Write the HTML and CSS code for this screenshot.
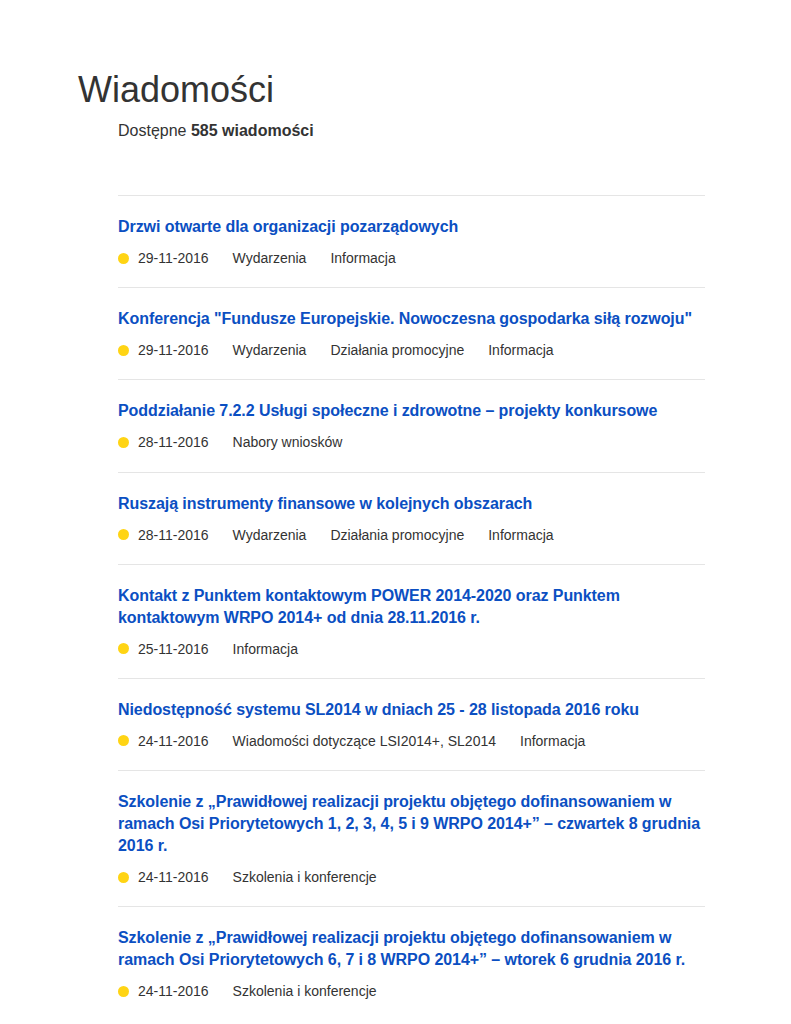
FILE: index.html
```html
<!DOCTYPE html>
<html>
	<head>
		<meta charset="UTF-8">
		<title>Wiadomości</title>
		<link rel="stylesheet" href="styles.css">
	</head>
	<body>
		<div id="news">
			<h1 class="title">Wiadomości</h1>
			<p class="count">Dostępne <b>585 wiadomości</b></p>
			<ul class="list">
				<li>
					<a href="">Drzwi otwarte dla organizacji pozarządowych</a>
					<div class="meta"><span class="date">29-11-2016</span><span>Wydarzenia</span><span>Informacja</span></div>
				</li>
				<li>
					<a href="">Konferencja "Fundusze Europejskie. Nowoczesna gospodarka siłą rozwoju"</a>
					<div class="meta"><span class="date">29-11-2016</span><span>Wydarzenia</span><span>Działania promocyjne</span><span>Informacja</span></div>
				</li>
				<li>
					<a href="">Poddziałanie 7.2.2 Usługi społeczne i zdrowotne – projekty konkursowe</a>
					<div class="meta"><span class="date">28-11-2016</span><span>Nabory wniosków</span></div>
				</li>
				<li>
					<a href="">Ruszają instrumenty finansowe w kolejnych obszarach</a>
					<div class="meta"><span class="date">28-11-2016</span><span>Wydarzenia</span><span>Działania promocyjne</span><span>Informacja</span></div>
				</li>
				<li>
					<a href="">Kontakt z Punktem kontaktowym POWER 2014-2020 oraz Punktem kontaktowym WRPO 2014+ od dnia 28.11.2016 r.</a>
					<div class="meta"><span class="date">25-11-2016</span><span>Informacja</span></div>
				</li>
				<li>
					<a href="">Niedostępność systemu SL2014 w dniach 25 - 28 listopada 2016 roku</a>
					<div class="meta"><span class="date">24-11-2016</span><span>Wiadomości dotyczące LSI2014+, SL2014</span><span>Informacja</span></div>
				</li>
				<li>
					<a href="">Szkolenie z „Prawidłowej realizacji projektu objętego dofinansowaniem w ramach Osi Priorytetowych 1, 2, 3, 4, 5 i 9 WRPO 2014+” – czwartek 8 grudnia 2016 r.</a>
					<div class="meta"><span class="date">24-11-2016</span><span>Szkolenia i konferencje</span></div>
				</li>
				<li>
					<a href="">Szkolenie z „Prawidłowej realizacji projektu objętego dofinansowaniem w ramach Osi Priorytetowych 6, 7 i 8 WRPO 2014+” – wtorek 6 grudnia 2016 r.</a>
					<div class="meta"><span class="date">24-11-2016</span><span>Szkolenia i konferencje</span></div>
				</li>
			</ul>
		</div>
	</body>
</html>
```
FILE: styles.css
```css
body,h1,p,ul,li{
	margin: 0;
	padding: 0;
}
li{
	list-style: none;
}
body{
	font-family: "Liberation Sans", Arial, sans-serif;
	color: #333;
	background: #fff;
}
#news{
	padding: 70px 0 0 78px;
}
.title{
	font-size: 36px;
	line-height: 40px;
	font-weight: normal;
	color: #333;
}
.count{
	margin: 10px 0 0 40px;
	font-size: 16px;
	line-height: 22px;
}
.count b{
	font-weight: bold;
}
.list{
	width: 587px;
	margin: 53px 0 0 40px;
}
.list li{
	border-top: 1px solid #e5e5e5;
	padding: 20px 0 19.2px;
}
.list a{
	display: block;
	font-size: 16px;
	line-height: 22px;
	font-weight: bold;
	letter-spacing: -0.07px;
	color: #0b4fc2;
	text-decoration: none;
}
/*kropka + kategorie*/
.meta{
	display: flex;
	align-items: center;
	gap: 24px;
	margin-top: 10px;
	font-size: 14px;
	line-height: 20px;
	color: #333;
}
.meta .date{
	display: flex;
	align-items: center;
}
.meta .date:before{
	content: "";
	width: 11px;
	height: 11px;
	margin: 0 9.5px 0 -0.5px;
	border-radius: 50%;
	background: #ffd414;
}
```
